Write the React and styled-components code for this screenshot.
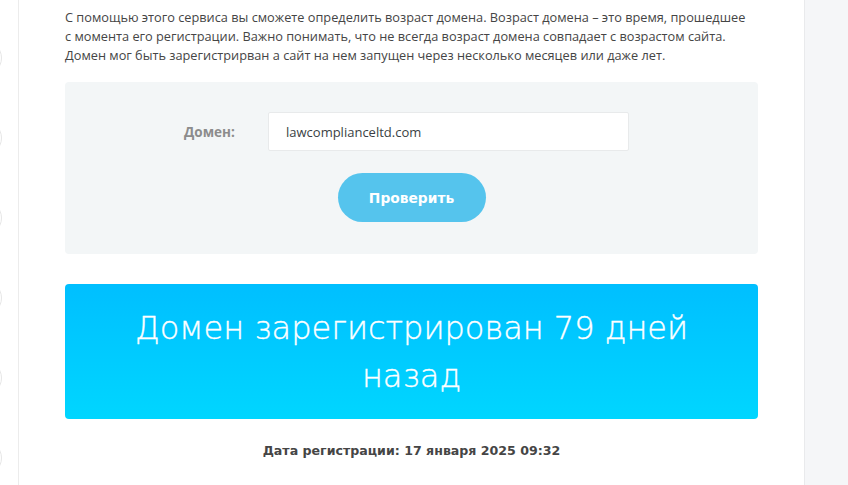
import React from "react";
import styled, { createGlobalStyle } from "styled-components";

const Global = createGlobalStyle`
  html, body { margin: 0; padding: 0; background: #fff; }
  body { font-family: "Open Sans", "Liberation Sans", sans-serif; }
`;

const Page = styled.div`
  display: flex;
  width: 848px;
  height: 485px;
  overflow: hidden;
`;

const Rail = styled.div`
  width: 19px;
  flex: none;
  border-right: 1px solid #ececec;
  display: flex;
  flex-direction: column;
  gap: 44px;
  padding-top: 40px;
  box-sizing: border-box;
`;

const RailIcon = styled.span`
  display: block;
  width: 36px;
  height: 36px;
  margin-left: -34px;
  border-radius: 50%;
  border: 1px solid #e6e6e6;
  box-sizing: border-box;
`;

const Main = styled.main`
  width: 785px;
  flex: none;
  box-sizing: border-box;
  padding: 8px 46px 0 46px;
`;

const Side = styled.aside`
  flex: 1;
  background: #f5f6f8;
  border-left: 1px solid #e9eaec;
`;

const Intro = styled.p`
  margin: 0;
  font-size: 12.75px;
  line-height: 19px;
  color: #454545;
  white-space: nowrap;
`;

const FormBox = styled.form`
  margin-top: 17px;
  background: #f3f6f7;
  border-radius: 4px;
  padding: 30px 0 32px;
  display: flex;
  flex-direction: column;
  align-items: center;
  gap: 22px;
`;

const Row = styled.div`
  align-self: stretch;
  display: flex;
  align-items: center;
  padding-left: 119px;
  gap: 34px;
`;

const Label = styled.label`
  font-size: 13.5px;
  font-weight: 700;
  color: #8c8c8c;
  width: 50px;
  white-space: nowrap;
`;

const Input = styled.input`
  width: 361px;
  height: 39px;
  box-sizing: border-box;
  border: 1px solid #e8eaeb;
  border-radius: 2px;
  background: #fff;
  padding: 0 17px;
  font-family: "Open Sans", "Liberation Sans", sans-serif;
  font-size: 13px;
  color: #3a3f44;
  outline: none;
`;

const Button = styled.button`
  width: 148px;
  height: 49px;
  border: none;
  border-radius: 25px;
  background: #55c4ed;
  color: #fff;
  font-family: "DejaVu Sans", "Open Sans", sans-serif;
  font-weight: 700;
  font-size: 13.8px;
  cursor: pointer;
`;

const Result = styled.div`
  margin-top: 30px;
  border-radius: 4px;
  background: linear-gradient(180deg, #00bfff 0%, #00d6ff 100%);
  padding: 20px 20px 19px;
  text-align: center;
  color: #fff;
  font-family: "DejaVu Sans", "Open Sans", sans-serif;
  font-weight: 200;
  font-size: 32px;
  line-height: 48px;
  -webkit-text-stroke: 0.35px #fff;
`;

const DateLine = styled.div`
  margin-top: 22px;
  text-align: center;
  font-family: "DejaVu Sans", "Open Sans", sans-serif;
  font-weight: 700;
  font-size: 12.6px;
  line-height: 20px;
  color: #454545;
`;

export default function App() {
  return (
    <>
      <Global />
      <Page>
        <Rail>
          {Array.from({ length: 6 }).map((_, i) => (
            <RailIcon key={i} />
          ))}
        </Rail>
        <Main>
          <Intro>
            С помощью этого сервиса вы сможете определить возраст домена. Возраст домена – это время, прошедшее
            <br />
            с момента его регистрации. Важно понимать, что не всегда возраст домена совпадает с возрастом сайта.
            <br />
            Домен мог быть зарегистрирван а сайт на нем запущен через несколько месяцев или даже лет.
          </Intro>
          <FormBox onSubmit={(e) => e.preventDefault()}>
            <Row>
              <Label htmlFor="domain">Домен:</Label>
              <Input id="domain" defaultValue="lawcomplianceltd.com" />
            </Row>
            <Button type="submit">Проверить</Button>
          </FormBox>
          <Result>
            Домен зарегистрирован 79 дней
            <br />
            назад
          </Result>
          <DateLine>Дата регистрации: 17 января 2025 09:32</DateLine>
        </Main>
        <Side />
      </Page>
    </>
  );
}
